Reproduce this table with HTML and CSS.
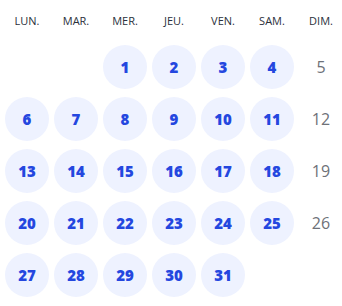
FILE: index.html
```html
<!DOCTYPE html>
<html lang="fr">
<head>
<meta charset="utf-8">
<link rel="stylesheet" href="styles.css">
</head>
<body>
<div class="cal">
  <div class="head">
    <span>LUN.</span><span>MAR.</span><span>MER.</span><span>JEU.</span><span>VEN.</span><span>SAM.</span><span>DIM.</span>
  </div>
  <div class="days">
    <span></span><span></span>
    <span class="d">1</span><span class="d">2</span><span class="d">3</span><span class="d">4</span><span class="w">5</span>
    <span class="d">6</span><span class="d">7</span><span class="d">8</span><span class="d">9</span><span class="d">10</span><span class="d">11</span><span class="w">12</span>
    <span class="d">13</span><span class="d">14</span><span class="d">15</span><span class="d">16</span><span class="d">17</span><span class="d">18</span><span class="w">19</span>
    <span class="d">20</span><span class="d">21</span><span class="d">22</span><span class="d">23</span><span class="d">24</span><span class="d">25</span><span class="w">26</span>
    <span class="d">27</span><span class="d">28</span><span class="d">29</span><span class="d">30</span><span class="d">31</span>
  </div>
</div>
</body>
</html>
```
FILE: styles.css
```css
html, body { margin: 0; background: #fff; }
body { font-family: "Open Sans", "Liberation Sans", sans-serif; }
.cal { padding: 14px 0 0 5px; }
.head, .days {
  display: grid;
  grid-template-columns: repeat(7, 44px);
  column-gap: 5px;
}
.head span {
  text-align: center;
  font-size: 11px;
  line-height: 14px;
  color: #2b303b;
}
.days { row-gap: 8px; margin-top: 17px; }
.days span {
  height: 44px;
  display: flex;
  align-items: center;
  justify-content: center;
}
.d {
  border-radius: 50%;
  background: #eef2ff;
  color: #2447df;
  font-weight: 800;
  font-size: 15px;
}
.w {
  color: #6e7178;
  font-size: 16px;
}
```
